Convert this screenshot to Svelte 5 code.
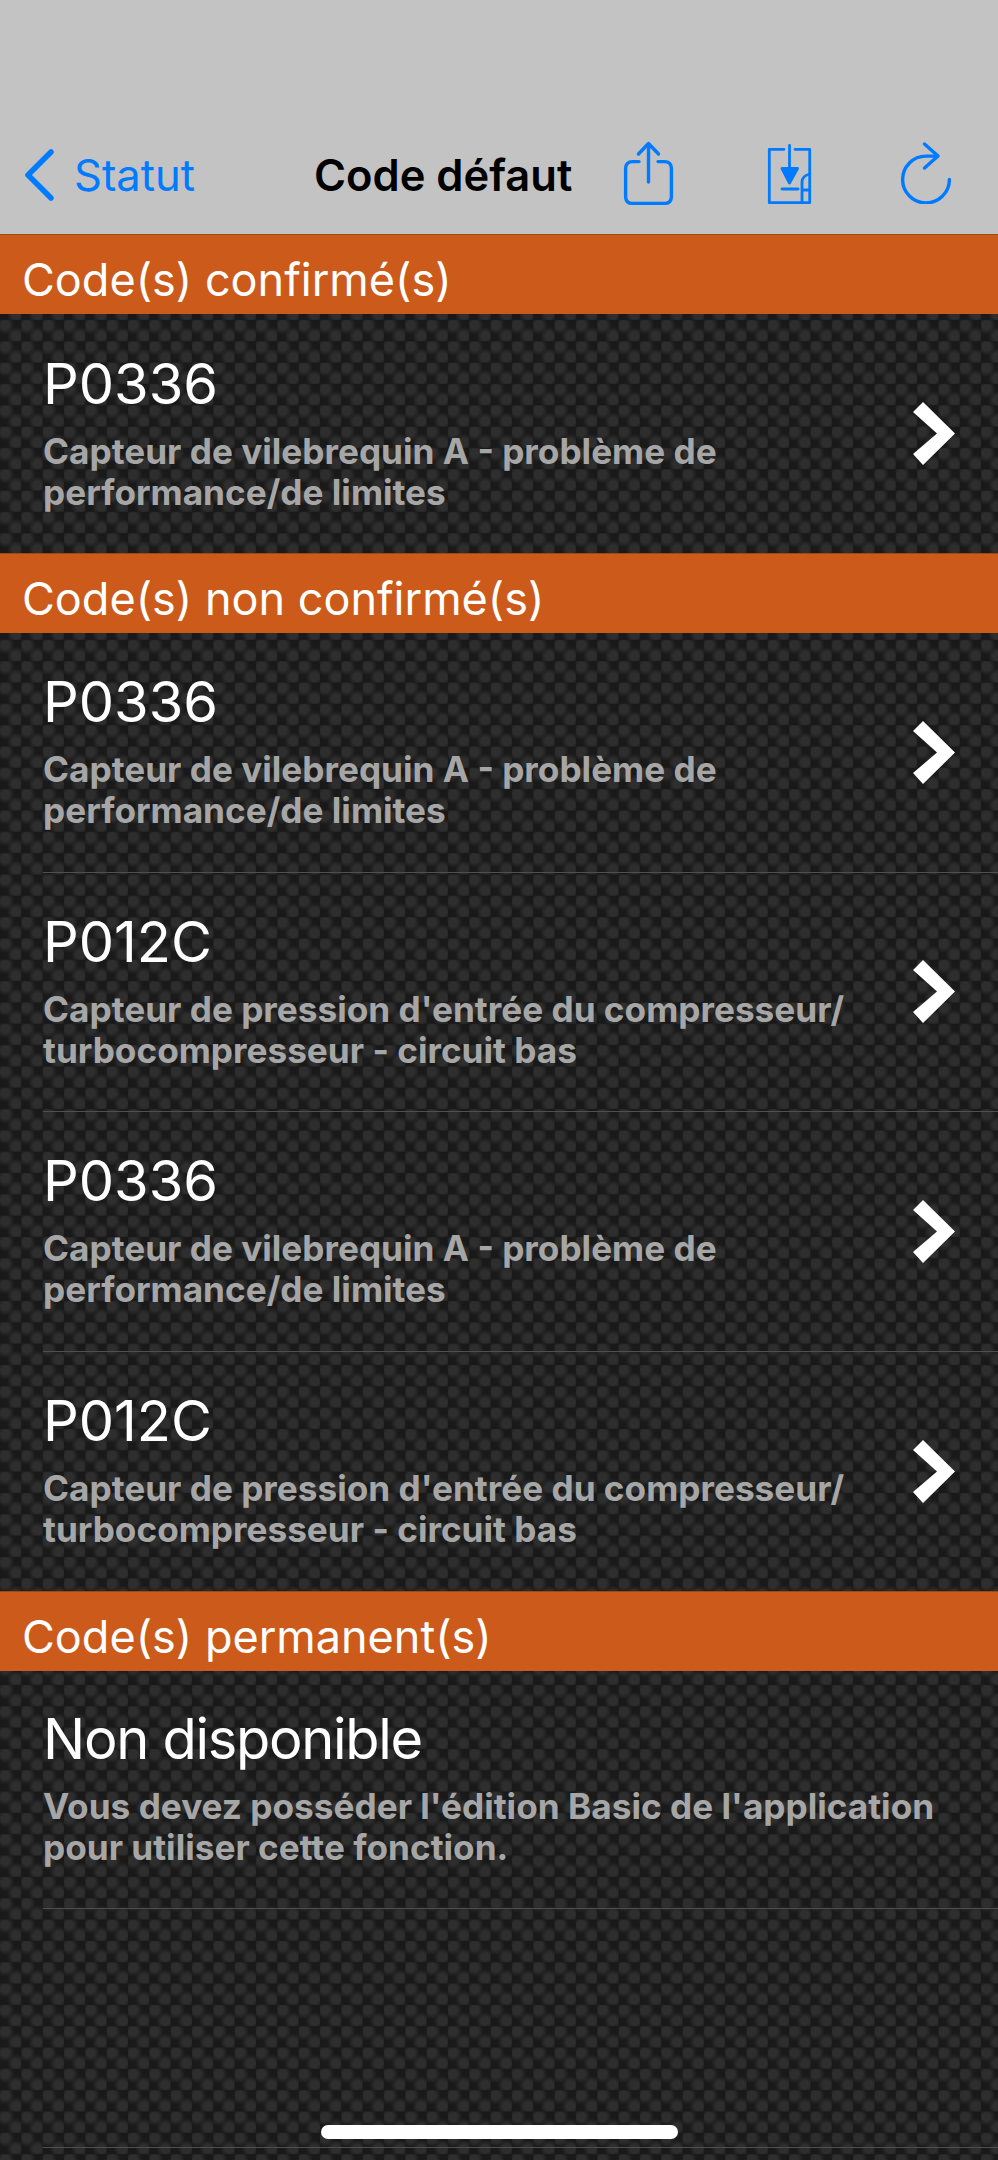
<script>
	const sections = [
		{
			title: 'Code(s) confirmé(s)',
			rows: [{ code: 'P0336', text: 'Capteur de vilebrequin A - problème de performance/de limites', arrow: true, last: true }]
		},
		{
			title: 'Code(s) non confirmé(s)',
			rows: [
				{ code: 'P0336', text: 'Capteur de vilebrequin A - problème de performance/de limites', arrow: true },
				{ code: 'P012C', text: "Capteur de pression d'entrée du compresseur/ turbocompresseur - circuit bas", arrow: true },
				{ code: 'P0336', text: 'Capteur de vilebrequin A - problème de performance/de limites', arrow: true },
				{ code: 'P012C', text: "Capteur de pression d'entrée du compresseur/ turbocompresseur - circuit bas", arrow: true, last: true }
			]
		},
		{
			title: 'Code(s) permanent(s)',
			rows: [
				{ code: 'Non disponible', text: "Vous devez posséder l'édition Basic de l'application pour utiliser cette fonction.", arrow: false },
				{ code: '', text: '', arrow: false, empty: true }
			]
		}
	];
</script>

<div class="screen">
	<header class="nav">
		<button class="back">
			<svg width="33" height="54" viewBox="0 0 33 54" fill="none" stroke="#007aff" stroke-width="5.5" stroke-linecap="round" stroke-linejoin="round">
				<path d="M28 4 L5 27 L28 50" />
			</svg>
			<span>Statut</span>
		</button>
		<h1>Code défaut</h1>
		<div class="actions">
			<svg width="52" height="66" viewBox="0 0 52 66" fill="none" stroke="#007aff" stroke-width="3.4" stroke-linecap="round" stroke-linejoin="round">
				<path d="M16 20.6 H9.6 Q2.6 20.6 2.6 27.6 V55.4 Q2.6 62.4 9.6 62.4 H41.4 Q48.4 62.4 48.4 55.4 V27.6 Q48.4 20.6 41.4 20.6 H35" />
				<path d="M25.5 41 V2.5 M15.5 13 L25.5 2.5 L35.5 13" />
			</svg>
			<svg class="save" width="46" height="62" viewBox="0 0 46 62" fill="none" stroke="#007aff" stroke-width="2.8" stroke-linejoin="round" stroke-linecap="round">
				<path d="M17 5.3 H2.3 V58.7 H42.7 V5.3 H28" />
				<path d="M22.5 1.5 V26" />
				<path d="M15 24.5 H30.5 L22.5 39 Z" fill="#007aff" />
				<path d="M15 45 H31" />
				<path d="M35 58 V38 Q35 32 42.7 30 M35 46 H42.7" />
			</svg>
			<svg width="52" height="63" viewBox="0 0 52 63" fill="none" stroke="#007aff" stroke-width="3.4" stroke-linecap="round" stroke-linejoin="round">
				<path d="M49.4 38.5 A23.4 23.4 0 1 1 26 15.1 H37" />
				<path d="M24.5 3 L38 15 L24.5 27" />
			</svg>
		</div>
	</header>

	<main class="list">
		{#each sections as section}
			<h2>{section.title}</h2>
			{#each section.rows as row}
				<div class="row" class:last={row.last} class:plain={!row.arrow}>
					{#if !row.empty}
						<div class="copy">
							<div class="code">{row.code}</div>
							<p>{row.text}</p>
						</div>
						{#if row.arrow}
							<svg class="chevron" width="42" height="63" viewBox="0 0 42 63" fill="#fff">
								<path d="M10 0 L42 31.5 L10 63 L0 52 L24 31.5 L0 10 Z" />
							</svg>
						{/if}
					{/if}
				</div>
			{/each}
		{/each}
	</main>

	<div class="home"></div>
</div>

<style>
	:global(body) {
		background: #1d1d1d;
	}

	.screen {
		position: relative;
		width: 998px;
		height: 2160px;
		overflow: hidden;
		font-family: Inter, "Liberation Sans", sans-serif;
		background-color: #191919;
		background-image:
			radial-gradient(ellipse 9px 9px at 5.33px 5.33px, #2e2e2e 45%, transparent 100%),
			radial-gradient(ellipse 9px 9px at 16px 16px, #2e2e2e 45%, transparent 100%);
		background-size: 21.33px 21.33px;
	}

	.nav {
		height: 234px;
		box-sizing: border-box;
		padding: 141px 46px 0 23px;
		display: flex;
		align-items: flex-start;
		background: #c3c3c3;
	}

	.back {
		display: flex;
		align-items: center;
		gap: 18px;
		width: 292px;
		height: 68px;
		padding: 0;
		border: 0;
		background: none;
		color: #007aff;
		font: inherit;
		font-size: 43.5px;
	}

	h1 {
		margin: 0;
		font-size: 43.5px;
		line-height: 68px;
		font-weight: 600;
		color: #000;
		white-space: nowrap;
		transform: translateX(-1px);
	}

	.actions {
		margin-left: auto;
		display: flex;
		gap: 92px;
		align-items: flex-start;
	}

	.save {
		margin: 3px -5px 0 0;
	}

	h2 {
		margin: 0;
		height: 80px;
		box-sizing: border-box;
		padding: 0 0 0 22px;
		font-size: 45px;
		font-weight: 400;
		line-height: 90px;
		color: #fff;
		background: #cc5a1a;
		border-top: 1px solid #9a4a18;
	}

	.row {
		height: 239.5px;
		box-sizing: border-box;
		margin-left: 43px;
		padding-right: 43px;
		display: flex;
		align-items: center;
		justify-content: space-between;
		border-bottom: 1px solid #4f4f4f;
	}

	.row.last {
		border-bottom: 0;
		height: 239px;
	}

	.row.plain {
		height: 238.5px;
	}

	.copy {
		width: 830px;
		margin-top: -4px;
	}

	.row.plain .copy {
		width: 910px;
	}

	.code {
		font-size: 56px;
		line-height: 66px;
		color: #fff;
	}

	.row.plain .code {
		letter-spacing: -1.3px;
	}

	p {
		margin: 14px 0 0;
		font-size: 35.2px;
		line-height: 41px;
		font-weight: 700;
		color: #a6a6a6;
	}

	.home {
		position: absolute;
		left: 321px;
		top: 2125px;
		width: 357px;
		height: 14px;
		border-radius: 7px;
		background: #fff;
	}
</style>
